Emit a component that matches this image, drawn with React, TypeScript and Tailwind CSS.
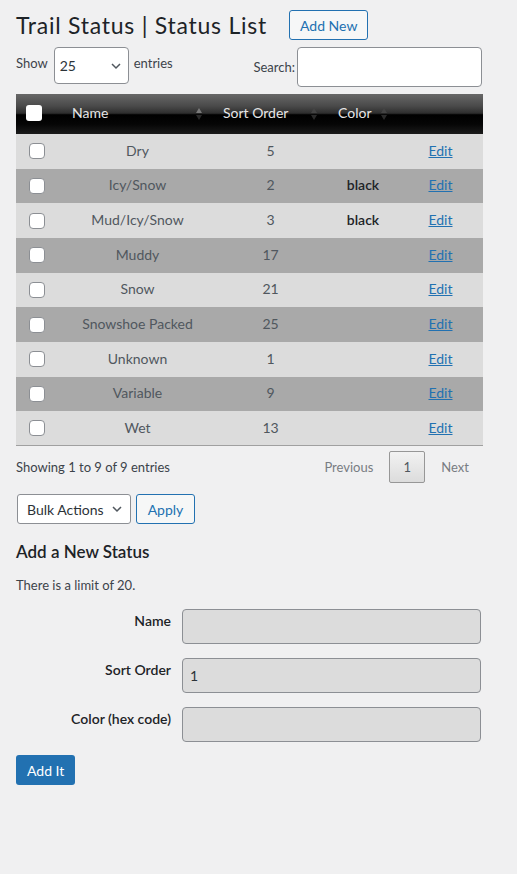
import React from 'react'

const STATUSES = [
    { name: 'Dry', order: 5, color: '' },
    { name: 'Icy/Snow', order: 2, color: 'black' },
    { name: 'Mud/Icy/Snow', order: 3, color: 'black' },
    { name: 'Muddy', order: 17, color: '' },
    { name: 'Snow', order: 21, color: '' },
    { name: 'Snowshoe Packed', order: 25, color: '' },
    { name: 'Unknown', order: 1, color: '' },
    { name: 'Variable', order: 9, color: '' },
    { name: 'Wet', order: 13, color: '' },
]

function SortIcon({ active = false }: { active?: boolean }) {
    return (
        <svg width="8" height="18" viewBox="0 0 8 18" className="absolute right-[10px] top-1/2 -translate-y-1/2">
            <path d="M4 3 L7 8 L1 8 Z" fill={active ? '#7a7a7a' : '#444'} />
            <path d="M4 15 L7 10 L1 10 Z" fill="#2a2a2a" />
        </svg>
    )
}

function Chevron() {
    return (
        <svg width="12" height="12" viewBox="0 0 12 12" className="shrink-0">
            <path d="M2 4 L6 8 L10 4" fill="none" stroke="#50575e" strokeWidth="1.5" />
        </svg>
    )
}

function Checkbox({ header = false }: { header?: boolean }) {
    return (
        <span
            className={
                header
                    ? 'inline-block size-[16px] rounded-[3px] bg-white'
                    : 'inline-block size-[16px] rounded-[4px] border border-[#8c8f94] bg-white'
            }
        />
    )
}

export default function App() {
    return (
        <div className="min-h-[874px] bg-[#f0f0f1] px-4 pt-[10px] text-[#50575e] font-['Lato','Noto_Sans',sans-serif]">
            <div className="flex items-center gap-[22px]">
                <h1 className="text-[23px] leading-[29px] tracking-[0.75px] text-[#1d2327]">Trail Status | Status List</h1>
                <button className="h-[30px] px-[10px] rounded-[3px] border border-[#2271b1] bg-[#f6f7f7] text-[14px] text-[#2271b1]">
                    Add New
                </button>
            </div>

            {/* length + filter */}
            <div className="mt-[7px] flex items-start justify-between w-[466px]">
                <div className="flex items-center gap-[5px] text-[13px] text-[#3c434a]">
                    <span className="-mt-[4px]">Show</span>
                    <div className="ml-[1px] flex items-center justify-between w-[75px] h-[37px] pl-[5px] pr-[6px] rounded-[4px] border border-[#8c8f94] bg-white text-[14px] text-[#2c3338]">
                        25
                        <Chevron />
                    </div>
                    <span className="-mt-[4px]">entries</span>
                </div>
                <div className="flex items-center gap-[2px] text-[13px] text-[#3c434a]">
                    <span className="mt-[2px]">Search:</span>
                    <div className="w-[185px] h-[40px] rounded-[4px] border border-[#8c8f94] bg-white" />
                </div>
            </div>

            {/* table */}
            <table className="mt-[7px] w-[467px] table-fixed border-collapse text-[14px]">
                <colgroup>
                    <col className="w-[46px]" />
                    <col className="w-[151px]" />
                    <col className="w-[115px]" />
                    <col className="w-[70px]" />
                    <col className="w-[85px]" />
                </colgroup>
                <thead>
                    <tr className="h-[40px] bg-[linear-gradient(to_bottom,#686868_0%,#4a4a4a_30%,#2e2e2e_48%,#000_52%,#050505_75%,#1b1b1b_100%)] text-[#e6e6e6]">
                        <th className="pl-[10px] pt-[3px] text-left font-normal">
                            <Checkbox header />
                        </th>
                        <th className="relative pl-[10px] pb-[3px] text-left font-normal">
                            Name
                            <SortIcon active />
                        </th>
                        <th className="relative pl-[10px] pb-[3px] text-left font-normal">
                            Sort Order
                            <SortIcon />
                        </th>
                        <th className="relative pl-[10px] pb-[3px] text-left font-normal">
                            Color
                            <SortIcon />
                        </th>
                        <th />
                    </tr>
                </thead>
                <tbody className="border-b border-[#a0a0a0]">
                    {STATUSES.map((s, i) => (
                        <tr key={s.name} className={i % 2 === 0 ? 'h-[34.67px] bg-[#dcdcdc]' : 'h-[34.67px] bg-[#a9a9a9]'}>
                            <td className="pl-[13px] align-middle">
                                <span className="flex">
                                    <Checkbox />
                                </span>
                            </td>
                            <td className="pb-[2px] text-center">{s.name}</td>
                            <td className="pb-[2px] text-center">{s.order}</td>
                            <td className="pb-[2px] text-center font-semibold text-[#1d2327]">{s.color}</td>
                            <td className="pb-[2px] text-center">
                                <a href="#" className="text-[#2271b1] underline">Edit</a>
                            </td>
                        </tr>
                    ))}
                </tbody>
            </table>

            {/* info + paging */}
            <div className="mt-[5px] flex items-center justify-between w-[467px] text-[13px]">
                <span className="text-[#3c434a]">Showing 1 to 9 of 9 entries</span>
                <div className="flex items-center text-[13px] text-[#787c82]">
                    <span className="px-[16px]">Previous</span>
                    <span className="flex items-center justify-center w-[36px] h-[32px] rounded-[2px] border border-[#979797] bg-[linear-gradient(to_bottom,#f2f2f2,#dcdcdc)] text-[#50575e]">
                        1
                    </span>
                    <span className="pl-[16px] pr-[14px]">Next</span>
                </div>
            </div>

            {/* bulk actions */}
            <div className="mt-[11px] ml-[1px] flex items-center gap-[5px]">
                <div className="flex items-center gap-[7px] h-[30px] pl-[9px] pr-[7px] rounded-[3px] border border-[#8c8f94] bg-white text-[14px] text-[#2c3338]">
                    Bulk Actions
                    <Chevron />
                </div>
                <button className="h-[30px] px-[11px] rounded-[3px] border border-[#2271b1] bg-[#f6f7f7] text-[14px] text-[#2271b1]">
                    Apply
                </button>
            </div>

            <h2 className="mt-[15px] text-[17px] font-semibold text-[#1d2327]">Add a New Status</h2>
            <p className="mt-[11px] text-[13px] text-[#3c434a]">There is a limit of 20.</p>

            {/* form */}
            <div className="mt-[14px] grid grid-cols-[155px_1fr] gap-x-[11px] gap-y-[14px] w-[465px]">
                <label className="pt-[1px] text-right text-[14px] font-semibold text-[#1d2327]">Name</label>
                <div className="h-[35px] rounded-[4px] border border-[#8c8f94] bg-[#dcdcdc]" />
                <label className="pt-[1px] text-right text-[14px] font-semibold text-[#1d2327]">Sort Order</label>
                <div className="flex items-center h-[35px] px-[7px] rounded-[4px] border border-[#8c8f94] bg-[#dcdcdc] text-[14px] text-[#2c3338]">
                    1
                </div>
                <label className="pt-[1px] text-right text-[14px] font-semibold text-[#1d2327]">Color (hex code)</label>
                <div className="h-[35px] rounded-[4px] border border-[#8c8f94] bg-[#dcdcdc]" />
            </div>

            <button className="mt-[13px] h-[30px] px-[11px] rounded-[3px] bg-[#2271b1] text-[14px] text-white">
                Add It
            </button>
        </div>
    )
}
